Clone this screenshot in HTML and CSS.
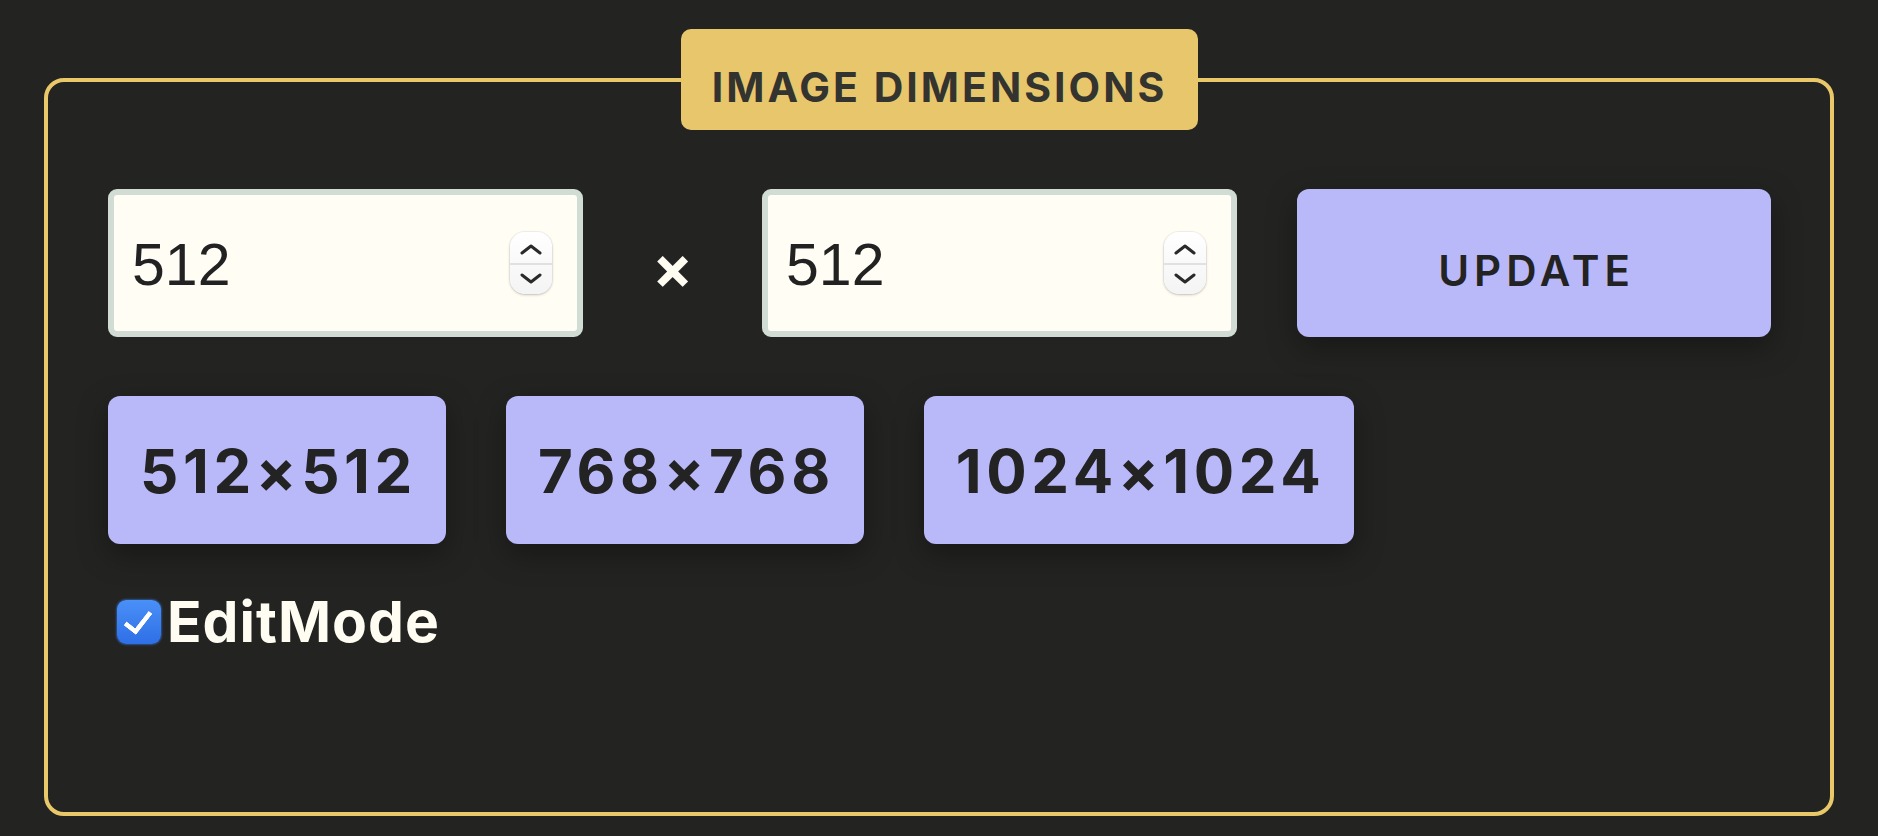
FILE: index.html
```html
<!DOCTYPE html>
<html lang="en">
<head>
<meta charset="utf-8">
<title>Image Dimensions</title>
<link rel="stylesheet" href="styles.css">
</head>
<body>
<fieldset class="dims">
  <legend class="dims-title">IMAGE DIMENSIONS</legend>
  <div class="size-row">
    <div class="num-field">
      <input class="num-input" type="text" value="512" aria-label="Width">
      <span class="spinner">
        <span class="spin spin-up"><svg width="24" height="12" viewBox="0 0 24 12"><path d="M3 10 L12 3 L21 10" fill="none" stroke="#2a2a2a" stroke-width="3" stroke-linecap="round" stroke-linejoin="round"/></svg></span>
        <span class="spin spin-down"><svg width="24" height="12" viewBox="0 0 24 12"><path d="M3 2 L12 9 L21 2" fill="none" stroke="#2a2a2a" stroke-width="3" stroke-linecap="round" stroke-linejoin="round"/></svg></span>
      </span>
    </div>
    <span class="times">×</span>
    <div class="num-field">
      <input class="num-input" type="text" value="512" aria-label="Height">
      <span class="spinner">
        <span class="spin spin-up"><svg width="24" height="12" viewBox="0 0 24 12"><path d="M3 10 L12 3 L21 10" fill="none" stroke="#2a2a2a" stroke-width="3" stroke-linecap="round" stroke-linejoin="round"/></svg></span>
        <span class="spin spin-down"><svg width="24" height="12" viewBox="0 0 24 12"><path d="M3 2 L12 9 L21 2" fill="none" stroke="#2a2a2a" stroke-width="3" stroke-linecap="round" stroke-linejoin="round"/></svg></span>
      </span>
    </div>
    <button class="btn btn-update" type="button">UPDATE</button>
  </div>
  <div class="presets">
    <button class="btn btn-preset" type="button">512×512</button>
    <button class="btn btn-preset" type="button">768×768</button>
    <button class="btn btn-preset" type="button">1024×1024</button>
  </div>
  <label class="edit-mode"><input class="check" type="checkbox" checked><span>EditMode</span></label>
</fieldset>
</body>
</html>
```

FILE: styles.css
```css
html, body {
  margin: 0;
  background: #232321;
}

body {
  padding-top: 29px;
  font-family: Inter, "Noto Sans", "Liberation Sans", sans-serif;
}

.dims {
  margin: 0 44px;
  border: 4px solid #e9c86a;
  border-radius: 20px;
  padding: 59px 59px 156px 60px;
  min-width: 0;
}

.dims-title {
  margin: 0 auto;
  padding: 33px 31px 18px 31px;
  background: #e8c66b;
  border-radius: 10px;
  color: #33332f;
  font-weight: 700;
  font-size: 41px;
  line-height: 50px;
  letter-spacing: 3px;
}

.size-row {
  display: flex;
  align-items: center;
}

.num-field {
  width: 475px;
  height: 148px;
  box-sizing: border-box;
  flex-shrink: 0;
  border: 6px solid #d1dcd5;
  border-radius: 9px;
  background: #fffdf4;
  display: flex;
  align-items: center;
  padding: 0 25px 0 18px;
}

.num-input {
  flex: 1;
  min-width: 0;
  border: 0;
  padding: 4px 0 0 0;
  margin: 0;
  background: transparent;
  outline: none;
  color: #222;
  font-family: "Liberation Sans", Arial, sans-serif;
  font-size: 59px;
}

.spinner {
  width: 42px;
  height: 62px;
  border-radius: 15px;
  background: linear-gradient(#ffffff, #f4f4f4);
  box-shadow: 0 1px 3px rgba(0, 0, 0, 0.22), 0 0 0 1px rgba(0, 0, 0, 0.04);
  display: flex;
  flex-direction: column;
  overflow: hidden;
}

.spin {
  flex: 1;
  display: flex;
  align-items: center;
  justify-content: center;
}

.spin-up {
  border-bottom: 2px solid #e1e1e1;
  padding-top: 3px;
}

.spin-down {
  padding-bottom: 1px;
}

.times {
  width: 179px;
  flex-shrink: 0;
  text-align: center;
  color: #fffdf2;
  font-weight: 700;
  font-size: 60px;
  padding-top: 8px;
}

.btn {
  border: 0;
  border-radius: 12px;
  background: #b9b8f9;
  color: #232323;
  font-family: Inter, "Noto Sans", "Liberation Sans", sans-serif;
  box-shadow: 0 10px 30px rgba(0, 0, 0, 0.35);
  cursor: pointer;
}

.btn-update {
  margin-left: 60px;
  width: 474px;
  height: 148px;
  flex-shrink: 0;
  font-weight: 600;
  font-size: 42px;
  letter-spacing: 5px;
  padding: 14px 0 0 5px;
}

.presets {
  display: flex;
  gap: 60px;
  margin-top: 59px;
}

.btn-preset {
  height: 148px;
  padding: 2px 29px 0 32px;
  font-weight: 700;
  font-size: 60px;
  letter-spacing: 4.6px;
}

.edit-mode {
  display: flex;
  align-items: center;
  gap: 6px;
  margin-top: 43px;
  margin-left: 9px;
  width: max-content;
  color: #fffdf2;
  font-weight: 700;
  font-size: 57px;
  letter-spacing: 1px;
}

.check {
  appearance: none;
  -webkit-appearance: none;
  width: 44px;
  height: 44px;
  margin: 0;
  border-radius: 9px;
  background: linear-gradient(#4a90f8, #2e6fe6);
  box-shadow: 0 0 2px 1px rgba(60, 130, 240, 0.5);
  position: relative;
  flex-shrink: 0;
}

.check::after {
  content: "";
  position: absolute;
  left: 13px;
  top: 6px;
  width: 11px;
  height: 22px;
  border: solid #ffffff;
  border-width: 0 5px 5px 0;
  border-radius: 1px;
  transform: rotate(38deg);
}
```
